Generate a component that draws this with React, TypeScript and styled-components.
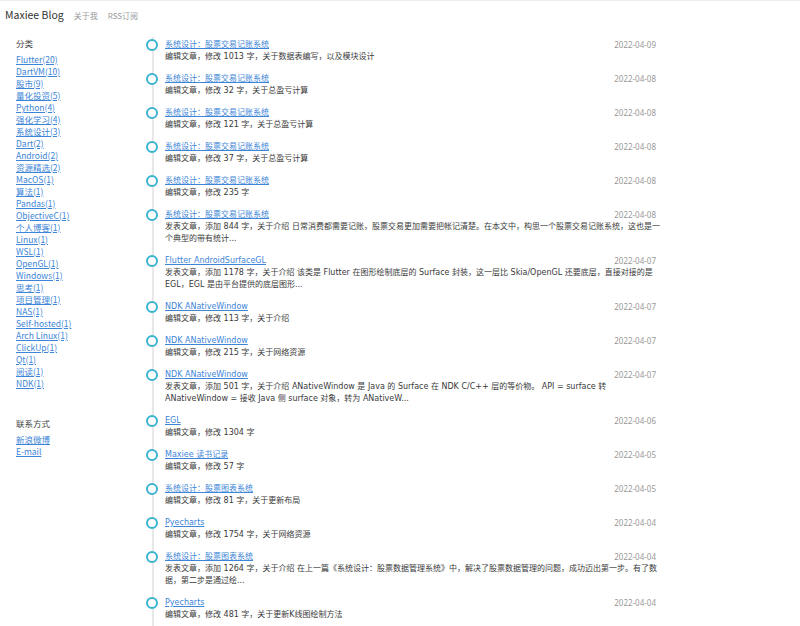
import React from "react";
import styled, { createGlobalStyle } from "styled-components";

const GlobalStyle = createGlobalStyle`
  body {
    margin: 0;
    background: #fff;
    font-family: "Noto Sans CJK SC", "Noto Sans", sans-serif;
    color: #333;
  }
`;

const latin = `"DejaVu Sans", "Noto Sans CJK SC", sans-serif`;

const Header = styled.header`
  display: flex;
  align-items: baseline;
  gap: 13px;
  height: 28px;
  padding: 6px 5px 0;
  box-sizing: border-box;
  border-top: 1px solid #eee;
`;

const Brand = styled.span`
  font-size: 10.5px;
  color: #333;
`;

const NavLink = styled.a`
  font-size: 8px;
  color: #999;
  text-decoration: none;
  margin-left: -3px;
`;

const Main = styled.div`
  display: flex;
  align-items: flex-start;
  padding-top: 9px;
`;

const Sidebar = styled.aside`
  width: 131px;
  padding-left: 16px;
  flex-shrink: 0;
`;

const SectionTitle = styled.div`
  font-size: 8.5px;
  line-height: 12px;
  color: #444;
  margin-bottom: 4px;
`;

const LinkList = styled.ul`
  list-style: none;
  margin: 0 0 28px;
  padding: 0;
`;

const SideLink = styled.a`
  display: block;
  font-size: 8.5px;
  line-height: 12px;
  color: #3d85d8;
  text-decoration: underline;
`;

const Timeline = styled.ul`
  list-style: none;
  margin: 0 0 0 5px;
  padding: 1px 0 0 11px;
  width: 498px;
  border-left: 2px solid #e8e8e8;
`;

const Item = styled.li`
  position: relative;
  padding-bottom: 9px;
`;

const Dot = styled.span`
  position: absolute;
  left: -19px;
  top: 1px;
  width: 8px;
  height: 8px;
  border: 2px solid #3ab4d2;
  border-radius: 50%;
  background: #fff;
`;

const TitleRow = styled.div`
  display: flex;
  justify-content: space-between;
  align-items: center;
  height: 13px;
  padding-right: 7px;
`;

const Title = styled.a`
  font-family: ${latin};
  font-size: 8px;
  line-height: 13px;
  color: #3d85d8;
  text-decoration: underline;
`;

const Date = styled.span`
  font-family: "Noto Sans", sans-serif;
  font-size: 8px;
  line-height: 13px;
  color: #999;
`;

const Desc = styled.div`
  font-family: ${latin};
  font-size: 8px;
  line-height: 12px;
  color: #3a3a3a;
`;

const categories = [
  "Flutter(20)",
  "DartVM(10)",
  "股市(9)",
  "量化投资(5)",
  "Python(4)",
  "强化学习(4)",
  "系统设计(3)",
  "Dart(2)",
  "Android(2)",
  "资源精选(2)",
  "MacOS(1)",
  "算法(1)",
  "Pandas(1)",
  "ObjectiveC(1)",
  "个人博客(1)",
  "Linux(1)",
  "WSL(1)",
  "OpenGL(1)",
  "Windows(1)",
  "思考(1)",
  "项目管理(1)",
  "NAS(1)",
  "Self-hosted(1)",
  "Arch Linux(1)",
  "ClickUp(1)",
  "Qt(1)",
  "阅读(1)",
  "NDK(1)",
];

const posts = [
  { title: "系统设计：股票交易记账系统", date: "2022-04-09", desc: "编辑文章，修改 1013 字，关于数据表编写，以及模块设计" },
  { title: "系统设计：股票交易记账系统", date: "2022-04-08", desc: "编辑文章，修改 32 字，关于总盈亏计算" },
  { title: "系统设计：股票交易记账系统", date: "2022-04-08", desc: "编辑文章，修改 121 字，关于总盈亏计算" },
  { title: "系统设计：股票交易记账系统", date: "2022-04-08", desc: "编辑文章，修改 37 字，关于总盈亏计算" },
  { title: "系统设计：股票交易记账系统", date: "2022-04-08", desc: "编辑文章，修改 235 字" },
  {
    title: "系统设计：股票交易记账系统",
    date: "2022-04-08",
    desc: "发表文章，添加 844 字，关于介绍 日常消费都需要记账，股票交易更加需要把帐记清楚。在本文中，构思一个股票交易记账系统，这也是一个典型的带有统计...",
  },
  {
    title: "Flutter AndroidSurfaceGL",
    date: "2022-04-07",
    desc: "发表文章，添加 1178 字，关于介绍 该类是 Flutter 在图形绘制底层的 Surface 封装，这一层比 Skia/OpenGL 还要底层，直接对接的是 EGL，EGL 是由平台提供的底层图形...",
  },
  { title: "NDK ANativeWindow", date: "2022-04-07", desc: "编辑文章，修改 113 字，关于介绍" },
  { title: "NDK ANativeWindow", date: "2022-04-07", desc: "编辑文章，修改 215 字，关于网络资源" },
  {
    title: "NDK ANativeWindow",
    date: "2022-04-07",
    desc: "发表文章，添加 501 字，关于介绍 ANativeWindow 是 Java 的 Surface 在 NDK C/C++ 层的等价物。 API = surface 转 ANativeWindow = 接收 Java 侧 surface 对象，转为 ANativeW...",
  },
  { title: "EGL", date: "2022-04-06", desc: "编辑文章，修改 1304 字" },
  { title: "Maxiee 读书记录", date: "2022-04-05", desc: "编辑文章，修改 57 字" },
  { title: "系统设计：股票图表系统", date: "2022-04-05", desc: "编辑文章，修改 81 字，关于更新布局" },
  { title: "Pyecharts", date: "2022-04-04", desc: "编辑文章，修改 1754 字，关于网络资源" },
  {
    title: "系统设计：股票图表系统",
    date: "2022-04-04",
    desc: "发表文章，添加 1264 字，关于介绍 在上一篇《系统设计：股票数据管理系统》中，解决了股票数据管理的问题，成功迈出第一步。有了数据，第二步是通过绘...",
  },
  { title: "Pyecharts", date: "2022-04-04", desc: "编辑文章，修改 481 字，关于更新K线图绘制方法" },
];

export default function App() {
  return (
    <>
      <GlobalStyle />
      <Header>
        <Brand>Maxiee Blog</Brand>
        <NavLink href="#">关于我</NavLink>
        <NavLink href="#">RSS订阅</NavLink>
      </Header>
      <Main>
        <Sidebar>
          <SectionTitle>分类</SectionTitle>
          <LinkList>
            {categories.map((c) => (
              <li key={c}>
                <SideLink href="#">{c}</SideLink>
              </li>
            ))}
          </LinkList>
          <SectionTitle>联系方式</SectionTitle>
          <LinkList>
            <li>
              <SideLink href="#">新浪微博</SideLink>
            </li>
            <li>
              <SideLink href="#">E-mail</SideLink>
            </li>
          </LinkList>
        </Sidebar>
        <Timeline>
          {posts.map((p, i) => (
            <Item key={i}>
              <Dot />
              <TitleRow>
                <Title href="#">{p.title}</Title>
                <Date>{p.date}</Date>
              </TitleRow>
              <Desc>{p.desc}</Desc>
            </Item>
          ))}
        </Timeline>
      </Main>
    </>
  );
}
